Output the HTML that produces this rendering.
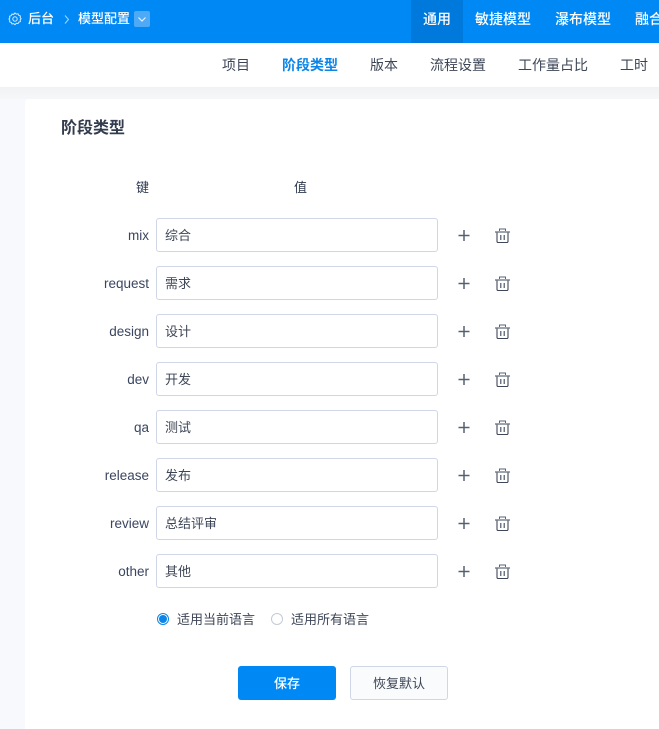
<!DOCTYPE html>
<html lang="zh">
<head>
<meta charset="utf-8">
<style>
html,body{margin:0;padding:0}
body{width:659px;height:729px;overflow:hidden;position:relative;background:#f8f9fc;font-family:"Liberation Sans","Noto Sans CJK SC",sans-serif;color:#2f3a52}
.a{position:absolute;white-space:nowrap}
#top{left:0;top:0;width:659px;height:43px;background:#0089f5}
.t{top:0;height:43px;line-height:38px;color:#fff;font-size:14px;font-weight:500}
#band{left:0;top:87px;width:659px;height:12px;background:linear-gradient(#f1f2f4,#f6f7f9)}
#sub{left:0;top:43px;width:659px;height:44px;background:#fff}
.s{top:43px;height:44px;line-height:45px;font-size:14px;color:#3d4657}
#card{left:25px;top:99px;width:634px;height:630px;background:#fff;border-radius:4px 0 0 0}
.k{left:60px;width:89px;text-align:right;font-size:13.5px;line-height:35px;height:34px;color:#3a4560}
.i{left:156px;width:272px;height:32px;border:1px solid #cfd6e6;border-radius:3px;background:#fff;padding-left:8px;font-size:13px;line-height:34px;color:#3d4657}
</style>
</head>
<body>
<div class="a" id="top"></div>
<svg class="a" style="left:8px;top:12px" width="14" height="14" viewBox="0 0 14 14" fill="none" stroke="#d5eaff" stroke-width="1"><path d="M7 .8l1.300 1.100 1.700-.3.800 1.500 1.600.6-.2 1.700.9 1.100-.9 1.100.2 1.700-1.600.6-.8 1.500-1.700-.3L7 12.500l-1.300-1.100-1.700.3-.8-1.500-1.600-.6.200-1.700L.9 6.800l.9-1.100-.2-1.700 1.600-.6.8-1.500 1.700.3z" transform="translate(0 .2)"/><circle cx="7" cy="7" r="2.200"/></svg>
<div class="a t" style="left:28px;font-size:13px">后台</div>
<svg class="a" style="left:63px;top:14px" width="8" height="11" viewBox="0 0 8 11" fill="none" stroke="#a8d5ff" stroke-width="1"><path d="M2 1.500l3.500 4-3.500 4"/></svg>
<div class="a t" style="left:78px;font-size:13px">模型配置</div>
<div class="a" style="left:134px;top:11px;width:16px;height:16px;border-radius:2px;background:#4ea9f6"></div>
<svg class="a" style="left:134px;top:11px" width="16" height="16" viewBox="0 0 16 16" fill="none" stroke="#e4f2ff" stroke-width="1.200"><path d="M4.500 6.500L8 10l3.500-3.500"/></svg>
<div class="a" style="left:411px;top:0;width:52px;height:43px;background:#0079dc"></div>
<div class="a t" style="left:423px">通用</div>
<div class="a t" style="left:475px">敏捷模型</div>
<div class="a t" style="left:555px">瀑布模型</div>
<div class="a t" style="left:635px">融合</div>

<div class="a" id="band"></div>
<div class="a" id="sub"></div>
<div class="a s" style="left:222px">项目</div>
<div class="a s" style="left:282px;color:#0a86ea;font-weight:700">阶段类型</div>
<div class="a s" style="left:370px">版本</div>
<div class="a s" style="left:430px">流程设置</div>
<div class="a s" style="left:518px">工作量占比</div>
<div class="a s" style="left:620px">工时</div>

<div class="a" id="card"></div>
<div class="a" style="left:61px;top:118px;font-size:16px;line-height:22px;font-weight:700;color:#333c4e">阶段类型</div>
<div class="a" style="left:136px;top:179px;font-size:13px;line-height:18px">键</div>
<div class="a" style="left:294px;top:179px;font-size:13px;line-height:18px">值</div>

<div class="a k" style="top:218px">mix</div><div class="a i" style="top:218px">综合</div>
<div class="a k" style="top:266px">request</div><div class="a i" style="top:266px">需求</div>
<div class="a k" style="top:314px">design</div><div class="a i" style="top:314px">设计</div>
<div class="a k" style="top:362px">dev</div><div class="a i" style="top:362px">开发</div>
<div class="a k" style="top:410px">qa</div><div class="a i" style="top:410px">测试</div>
<div class="a k" style="top:458px">release</div><div class="a i" style="top:458px">发布</div>
<div class="a k" style="top:506px">review</div><div class="a i" style="top:506px">总结评审</div>
<div class="a k" style="top:554px">other</div><div class="a i" style="top:554px">其他</div>

<svg class="a" style="left:0;top:0" width="659" height="729" fill="none">
<defs>
<g id="act">
<path d="M458.500 235.500h11M464 230v11" stroke="#566072" stroke-width="1.500"/>
<path d="M495 232h15" stroke="#7a8494" stroke-width="1.500"/>
<path d="M499.500 231v-2h6v2" stroke="#5a6475" stroke-width="1"/>
<path d="M497 232.500v8.700c0 .8.500 1.300 1.300 1.300h8.400c.8 0 1.300-.5 1.300-1.300v-8.700" stroke="#3f4859" stroke-width="1.100"/>
<path d="M500.800 235v5M504.200 235v5" stroke="#3f4859" stroke-width="1.100"/>
</g>
</defs>
<use href="#act"/>
<use href="#act" y="48"/>
<use href="#act" y="96"/>
<use href="#act" y="144"/>
<use href="#act" y="192"/>
<use href="#act" y="240"/>
<use href="#act" y="288"/>
<use href="#act" y="336"/>
<circle cx="163" cy="619" r="5.500" stroke="#0a86ea"/>
<circle cx="163" cy="619" r="4" fill="#0a86ea"/>
<circle cx="277" cy="619" r="5.500" stroke="#c4cad6"/>
</svg>
<div class="a" style="left:177px;top:611px;font-size:13px;line-height:18px;color:#3d4657">适用当前语言</div>
<div class="a" style="left:291px;top:611px;font-size:13px;line-height:18px;color:#3d4657">适用所有语言</div>

<div class="a" style="left:238px;top:666px;width:98px;height:34px;border-radius:3px;background:#0089f5;color:#fff;font-size:13px;line-height:36px;text-align:center;font-weight:500">保存</div>
<div class="a" style="left:350px;top:666px;width:96px;height:32px;border:1px solid #cfd6e6;border-radius:3px;background:#fafbfd;color:#3d4657;font-size:13px;line-height:34px;text-align:center">恢复默认</div>
</body>
</html>
